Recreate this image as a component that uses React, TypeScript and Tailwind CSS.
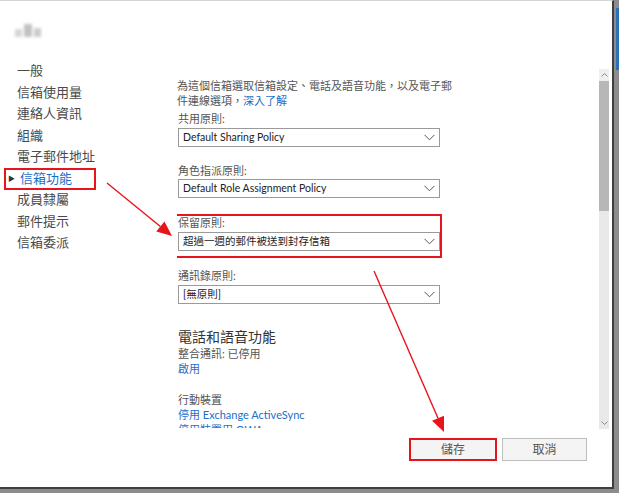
import React from "react";

const font = { fontFamily: 'Lato, "Noto Sans CJK TC", sans-serif' };

const navItems = ["一般", "信箱使用量", "連絡人資訊", "組織", "電子郵件地址", "信箱功能", "成員隸屬", "郵件提示", "信箱委派"];

function Chevron() {
  return (
    <svg width="11" height="7" viewBox="0 0 11 7" className="shrink-0">
      <path d="M0.5 0.8 L5.5 5.8 L10.5 0.8" fill="none" stroke="#555" strokeWidth="1" />
    </svg>
  );
}

function Select({ value }: { value: string }) {
  return (
    <div className="flex h-[19px] w-[262px] items-center justify-between border border-[#9a9a9a] bg-white pl-[4px] pr-[4px] text-[10.5px] leading-none text-[#222]">
      <span>{value}</span>
      <Chevron />
    </div>
  );
}

function Label({ children, className = "" }: { children: React.ReactNode; className?: string }) {
  return <div className={`text-[11px] leading-[15px] text-[#555] ${className}`}>{children}</div>;
}

function Arrow({ x1, y1, x2, y2 }: { x1: number; y1: number; x2: number; y2: number }) {
  const dx = x2 - x1;
  const dy = y2 - y1;
  const len = Math.hypot(dx, dy);
  const ux = dx / len;
  const uy = dy / len;
  const hl = 15;
  const hw = 6.5;
  const bx = x2 - ux * hl;
  const by = y2 - uy * hl;
  const pts = `${x2},${y2} ${bx - uy * hw},${by + ux * hw} ${bx + uy * hw},${by - ux * hw}`;
  return (
    <g>
      <line x1={x1} y1={y1} x2={bx} y2={by} stroke="#e8141c" strokeWidth="1.4" />
      <polygon points={pts} fill="#e8141c" />
    </g>
  );
}

export default function App() {
  return (
    <div className="relative h-[493px] w-[619px] overflow-hidden bg-[#8c8c8c]" style={font}>
      <div className="absolute right-0 top-[8px] h-[62px] w-[3px] bg-[#2c6fb5]" />
      <div className="relative flex h-[489px] w-[614px] flex-col border-b-2 border-r-2 border-t border-[#3e3e3e] border-t-[#d4d4d4] bg-white">
        <div className="flex h-[427px]">
          {/* left nav */}
          <div className="w-[177px] shrink-0">
            <div className="ml-[15px] mt-[23px] flex h-[13px] w-[26px] gap-[2px] opacity-60 blur-[1.5px]">
              <div className="h-[8px] w-[8px] self-end bg-[#bbb]" />
              <div className="h-[13px] w-[8px] bg-[#999]" />
              <div className="h-[9px] w-[8px] self-end bg-[#aaa]" />
            </div>
            <div className="mt-[23px] flex flex-col">
              {navItems.map((item) =>
                item === "信箱功能" ? (
                  <div key={item} className="relative h-[21.5px]">
                    <div className="absolute left-[4px] top-[0px] flex h-[22px] w-[92px] items-center border-2 border-[#e8141c] pl-[2px]">
                      <span className="mr-[5px] text-[7px] text-[#333]">▶</span>
                      <span className="text-[13px] leading-none text-[#1a6fc9]">{item}</span>
                    </div>
                  </div>
                ) : (
                  <div key={item} className="flex h-[21.5px] items-center pl-[17px] text-[13px] leading-none text-[#4a4a4a]">
                    {item}
                  </div>
                )
              )}
            </div>
          </div>

          {/* content */}
          <div className="w-[422px] overflow-hidden pt-[77px]">
            <div className="text-[11px] leading-[15px] text-[#555]">
              為這個信箱選取信箱設定、電話及語音功能，以及電子郵
              <br />
              件連線選項，<span className="text-[#1a6fc9]">深入了解</span>
            </div>
            <div className="ml-[1px]">
              <Label className="mt-[3px]">共用原則:</Label>
              <div className="mt-[2px]">
                <Select value="Default Sharing Policy" />
              </div>
              <Label className="mt-[16px]">角色指派原則:</Label>
              <div className="mt-[1px]">
                <Select value="Default Role Assignment Policy" />
              </div>
            </div>
            <div className="-ml-[2px] mt-[16px] h-[44px] w-[267px] border-2 border-[#e8141c] pl-[1px]">
              <div className="text-[11px] leading-[14px] text-[#555]">保留原則:</div>
              <div className="mt-[2px]">
                <Select value="超過一週的郵件被送到封存信箱" />
              </div>
            </div>
            <div className="ml-[1px]">
              <Label className="mt-[10px]">通訊錄原則:</Label>
              <div className="mt-[2px]">
                <Select value="[無原則]" />
              </div>
              <div className="mt-[24px] text-[14px] leading-[18px] text-[#333]">電話和語音功能</div>
              <Label className="mt-0">整合通訊: 已停用</Label>
              <div className="text-[11px] leading-[15px] text-[#1a6fc9]">啟用</div>
              <Label className="mt-[16px]">行動裝置</Label>
              <div className="text-[11px] leading-[15px] text-[#1a6fc9]">停用 Exchange ActiveSync</div>
              <div className="text-[11px] leading-[15px] text-[#1a6fc9]">停用裝置用 OWA</div>
            </div>
          </div>

          {/* scrollbar */}
          <div className="mt-[68px] flex h-[360px] w-[10px] flex-col bg-[#e9e9e9]">
            <div className="flex h-[12px] items-center justify-center bg-[#efefef]">
              <svg width="7" height="4" viewBox="0 0 7 4">
                <path d="M0.5 3.5 L3.5 0.5 L6.5 3.5" fill="none" stroke="#888" strokeWidth="1" />
              </svg>
            </div>
            <div className="h-[130px] bg-[#b7b7b7]" />
            <div className="flex-1" />
            <div className="flex h-[12px] items-center justify-center">
              <svg width="7" height="4" viewBox="0 0 7 4">
                <path d="M0.5 0.5 L3.5 3.5 L6.5 0.5" fill="none" stroke="#888" strokeWidth="1" />
              </svg>
            </div>
          </div>
        </div>

        {/* footer */}
        <div className="flex justify-end gap-[5px] pr-[25px] pt-[10px]">
          <div className="flex h-[23px] w-[88px] items-center justify-center border-2 border-[#e8141c] bg-[#f4f4f4] text-[12px] text-[#555]">
            儲存
          </div>
          <div className="flex h-[23px] w-[85px] items-center justify-center border border-[#bdbdbd] bg-[#f4f4f4] text-[12px] text-[#555]">
            取消
          </div>
        </div>
      </div>

      <svg className="pointer-events-none absolute left-0 top-0" width="619" height="493">
        <Arrow x1={107} y1={183} x2={172} y2={236} />
        <Arrow x1={374} y1={271} x2={444} y2={432} />
      </svg>
    </div>
  );
}
